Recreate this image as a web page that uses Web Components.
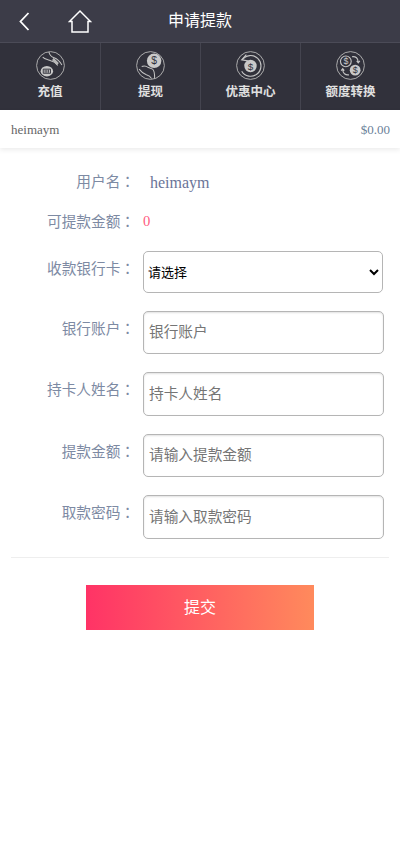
<!DOCTYPE html>
<html lang="zh">
<head>
<meta charset="utf-8">
<title>申请提款</title>
<style>
html, body { margin: 0; padding: 0; background: #fff; }
body { font-family: "Liberation Serif", "Noto Sans CJK SC", serif; }
</style>
</head>
<body>
<top-bar>申请提款</top-bar>
<nav-menu>
  <nav-item icon="deposit">充值</nav-item>
  <nav-item icon="withdraw">提现</nav-item>
  <nav-item icon="promo">优惠中心</nav-item>
  <nav-item icon="transfer">额度转换</nav-item>
</nav-menu>
<user-bar name="heimaym" balance="$0.00"></user-bar>
<withdraw-form>
  <form-row label="用户名" kind="text" style="--row-h:26px;--after:14px"><span class="name">heimaym</span></form-row>
  <form-row label="可提款金额" kind="text" style="--row-h:26px;--after:17px"><span class="zero">0</span></form-row>
  <form-row label="收款银行卡" style="--after:18px"><field-select></field-select></form-row>
  <form-row label="银行账户" style="--after:18px"><field-input placeholder="银行账户" h="43"></field-input></form-row>
  <form-row label="持卡人姓名" style="--after:18px"><field-input placeholder="持卡人姓名" h="44"></field-input></form-row>
  <form-row label="提款金额" style="--after:18px"><field-input placeholder="请输入提款金额" h="43"></field-input></form-row>
  <form-row label="取款密码"><field-input placeholder="请输入取款密码" h="44"></field-input></form-row>
</withdraw-form>
<submit-button>提交</submit-button>

<script>
class TopBar extends HTMLElement {
    connectedCallback() {
        this.attachShadow({mode: "open"}).innerHTML = `
        <style>
            :host { display: block; height: 42px; background: #3c3c48; border-bottom: 1px solid #4b4b57; }
            .bar { height: 42px; display: grid; grid-template-columns: 1fr auto 1fr; align-items: center; }
            .left { display: flex; align-items: center; padding-left: 18px; gap: 36px; }
            svg { display: block; }
            .title { color: #fff; font: 16px "Liberation Serif", "Noto Sans CJK SC", serif; padding-bottom: 4px; }
        </style>
        <div class="bar">
            <div class="left">
                <svg width="14" height="22" viewBox="0 0 14 22" fill="none" stroke="#fff" stroke-width="1.8"><path d="M10.500 3 2.500 11.500 10.500 20"/></svg>
                <svg width="24" height="24" viewBox="0 0 24 24" fill="none" stroke="#fff" stroke-width="1.500"><path d="M1.500 12.500 12 2 22.500 12.500H20V23H4V12.500z"/></svg>
            </div>
            <div class="title"><slot></slot></div>
            <div></div>
        </div>`;
    }
}
customElements.define("top-bar", TopBar);

class NavMenu extends HTMLElement {
    connectedCallback() {
        this.attachShadow({mode: "open"}).innerHTML = `
        <style>
            :host { display: grid; grid-template-columns: repeat(4, 1fr); height: 67px; background: #31313b; }
        </style>
        <slot></slot>`;
    }
}
customElements.define("nav-menu", NavMenu);

const navIcons = {
    deposit: `<path d="M12.500 1c.5 3 2 4.500 5 5.500 3 1 5.500 3.500 7.500 7" stroke-width="1"/><path d="M6.500 6c2 2 4 2 6.500 3l5 2 3 3" stroke-width="1"/><path d="M17 6.500l5 5-1.500 2-5-4.500z" fill="#b8b8b8" stroke="none"/><ellipse cx="10.500" cy="19.500" rx="6" ry="5" fill="#c9c9c9" stroke="none"/><path d="M7 17.500h7v4H7z M8.800 18v3 M10.500 18v3 M12.200 18v3" stroke="#31313b" stroke-width=".9"/>`,
    withdraw: `<circle cx="17.500" cy="9.500" r="7" fill="#c9c9c9" stroke="none"/><text x="17.500" y="13" text-anchor="middle" font-size="10" font-family="Liberation Sans" fill="#31313b" stroke="none">$</text><path d="M5.500 15c2.500-1 4.500-.5 6.500 1l4 1.500c1.500 1 2 4 2 9" stroke-width="1"/><path d="M3 17.500c2 2.500 4 4.500 7 5.500 2 .5 3.500 1 5 3.500" stroke-width="1"/>`,
    promo: `<path d="M6 8.500A10 10 0 1 1 5.500 19.500" stroke-width="1.100"/><path d="M10 3.500 5.500 8.500l6 1" stroke-width="1.100"/><circle cx="14" cy="14.500" r="6" fill="#c9c9c9" stroke="none"/><text x="14" y="18" text-anchor="middle" font-size="9.500" font-family="Liberation Sans" fill="#31313b" stroke="none">$</text>`,
    transfer: `<circle cx="9.500" cy="10" r="5.200" stroke-width="1.100"/><text x="9.500" y="13" text-anchor="middle" font-size="8.500" font-family="Liberation Sans" fill="#c9c9c9" stroke="none">$</text><circle cx="18.500" cy="18.500" r="5.200" fill="#c9c9c9" stroke="none"/><text x="18.500" y="21.500" text-anchor="middle" font-size="8.500" font-family="Liberation Sans" fill="#31313b" stroke="none">$</text><path d="M15.500 5.500c3.500-.5 6 1.500 6 5.500M20 9.500l1.500 2 1.500-2" stroke-width="1.100"/><path d="M12.500 23c-3.500.5-6-1.500-6-5.500M5 19l1.500-2 1.500 2" stroke-width="1.100"/>`
};

class NavItem extends HTMLElement {
    connectedCallback() {
        this.attachShadow({mode: "open"}).innerHTML = `
        <style>
            :host { display: flex; flex-direction: column; align-items: center; padding-top: 8px; box-sizing: border-box; border-left: 1px solid #44444f; }
            :host(:first-child) { border-left: 0; }
            svg { display: block; margin-bottom: 2px; }
            .text { color: #e0e0e0; font: bold 12.500px/18px "Noto Sans CJK SC", sans-serif; }
        </style>
        <svg width="29" height="29" viewBox="0 0 28 28" fill="none" stroke="#c4c4c4">
            <circle cx="14" cy="14" r="13.400" stroke="#b4b4b4" stroke-width=".9"/>
            ${navIcons[this.getAttribute("icon")]}
        </svg>
        <div class="text"><slot></slot></div>`;
    }
}
customElements.define("nav-item", NavItem);

class UserBar extends HTMLElement {
    connectedCallback() {
        this.attachShadow({mode: "open"}).innerHTML = `
        <style>
            :host { display: flex; justify-content: space-between; align-items: center; height: 38px; box-sizing: border-box; padding: 1px 10px 0 11px; box-shadow: 0 2px 5px rgba(0,0,0,.08); font: 13px "Liberation Serif", serif; color: #666; background: #fff; position: relative; }
            .bal { color: #6b7f99; }
        </style>
        <span>${this.getAttribute("name")}</span>
        <span class="bal">${this.getAttribute("balance")}</span>`;
    }
}
customElements.define("user-bar", UserBar);

class WithdrawForm extends HTMLElement {
    connectedCallback() {
        this.attachShadow({mode: "open"}).innerHTML = `
        <style>
            :host { display: block; margin: 0 11px; padding: 20px 0 18px; border-bottom: 1px solid #eee; }
        </style>
        <slot></slot>`;
    }
}
customElements.define("withdraw-form", WithdrawForm);

class FormRow extends HTMLElement {
    connectedCallback() {
        const isText = this.getAttribute("kind") === "text";
        this.attachShadow({mode: "open"}).innerHTML = `
        <style>
            :host { display: grid; grid-template-columns: 124px 1fr; column-gap: 8px; margin-bottom: var(--after, 0); min-height: var(--row-h, 0); align-items: ${isText ? "center" : "start"}; }
            label { text-align: right; color: #7d8aa3; font: 14.670px/20px "Noto Sans CJK SC", sans-serif; padding-top: ${isText ? 0 : 7}px; }
            .colon { font-family: "Noto Sans CJK TC", sans-serif; }
            ::slotted(.name) { color: #6a7498; font: 16px "Liberation Serif", serif; padding-left: 7px; position: relative; top: 2px; }
            ::slotted(.zero) { color: #ff5a7e; font: 14.670px "Liberation Serif", serif; }
        </style>
        <label>${this.getAttribute("label")}<span class="colon" lang="zh-TW">：</span></label>
        <div><slot></slot></div>`;
    }
}
customElements.define("form-row", FormRow);

class FieldInput extends HTMLElement {
    connectedCallback() {
        const h = this.getAttribute("h") || 43;
        this.attachShadow({mode: "open"}).innerHTML = `
        <style>
            :host { display: block; }
            input { display: block; box-sizing: border-box; width: 241px; height: ${h}px; padding: 0 5px 4px; border: 1px solid #b5b5b5; border-radius: 5px; background: #fff; box-shadow: inset 0 1px 2px rgba(0,0,0,.12); font: 14.670px "Noto Sans CJK SC", sans-serif; outline: 0; }
            input::placeholder { color: #757575; opacity: 1; }
        </style>
        <input type="text" placeholder="${this.getAttribute("placeholder")}">`;
    }
}
customElements.define("field-input", FieldInput);

class FieldSelect extends HTMLElement {
    connectedCallback() {
        this.attachShadow({mode: "open"}).innerHTML = `
        <style>
            :host { display: block; }
            select { display: block; box-sizing: border-box; width: 240px; height: 42px; padding: 0 0 2px; border: 1px solid #b5b5b5; border-radius: 5px; background: #fff; color: #000; font: 13px "Noto Sans CJK SC", sans-serif; outline: 0; }
        </style>
        <select><option>请选择</option></select>`;
    }
}
customElements.define("field-select", FieldSelect);

class SubmitButton extends HTMLElement {
    connectedCallback() {
        this.attachShadow({mode: "open"}).innerHTML = `
        <style>
            :host { display: block; margin: 27px auto 0; width: 228px; }
            button { display: block; width: 100%; height: 45px; border: 0; padding: 0 0 3px; background: linear-gradient(90deg, #ff3366, #ff8a5c); color: #fff; font: 16px "Noto Sans CJK SC", sans-serif; }
        </style>
        <button type="button"><slot></slot></button>`;
    }
}
customElements.define("submit-button", SubmitButton);
</script>
</body>
</html>
